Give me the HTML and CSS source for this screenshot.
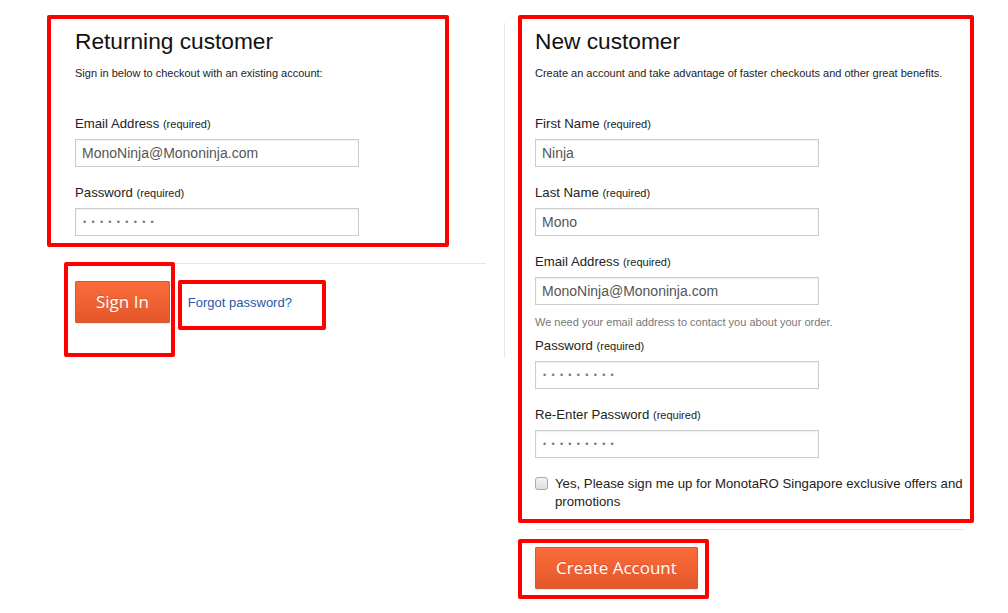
FILE: index.html
```html
<!DOCTYPE html>
<html lang="en">
<head>
<meta charset="utf-8">
<title>Sign in</title>
<link rel="stylesheet" href="styles.css">
</head>
<body>
<main class="page">
  <section class="col col-left">
    <h2 class="title">Returning customer</h2>
    <p class="intro">Sign in below to checkout with an existing account:</p>
    <div class="fields">
      <div class="field">
        <label class="label">Email Address <span class="req">(required)</span></label>
        <input class="input" type="text" value="MonoNinja@Mononinja.com">
      </div>
      <div class="field">
        <label class="label">Password <span class="req">(required)</span></label>
        <input class="input input-pass" type="password" value="123456789">
      </div>
    </div>
    <hr class="rule rule-left">
    <div class="actions">
      <button class="btn" type="button">Sign In</button>
      <a class="link" href="#">Forgot password?</a>
    </div>
  </section>

  <section class="col col-right">
    <h2 class="title">New customer</h2>
    <p class="intro">Create an account and take advantage of faster checkouts and other great benefits.</p>
    <div class="fields">
      <div class="field">
        <label class="label">First Name <span class="req">(required)</span></label>
        <input class="input" type="text" value="Ninja">
      </div>
      <div class="field">
        <label class="label">Last Name <span class="req">(required)</span></label>
        <input class="input" type="text" value="Mono">
      </div>
      <div class="field field-help">
        <label class="label">Email Address <span class="req">(required)</span></label>
        <input class="input" type="text" value="MonoNinja@Mononinja.com">
        <p class="help">We need your email address to contact you about your order.</p>
      </div>
      <div class="field">
        <label class="label">Password <span class="req">(required)</span></label>
        <input class="input input-pass" type="password" value="123456789">
      </div>
      <div class="field">
        <label class="label">Re-Enter Password <span class="req">(required)</span></label>
        <input class="input input-pass" type="password" value="123456789">
      </div>
    </div>
    <label class="check">
      <input class="checkbox" type="checkbox">
      <span class="check-text">Yes, Please sign me up for MonotaRO Singapore exclusive offers and promotions</span>
    </label>
    <hr class="rule rule-right">
    <div class="actions">
      <button class="btn" type="button">Create Account</button>
    </div>
  </section>
</main>

<div class="marks" aria-hidden="true">
  <div class="mark mark-returning"></div>
  <div class="mark mark-signin"></div>
  <div class="mark mark-forgot"></div>
  <div class="mark mark-new"></div>
  <div class="mark mark-create"></div>
</div>
</body>
</html>
```

FILE: styles.css
```css
* { box-sizing: border-box; }

html, body {
  margin: 0;
  padding: 0;
  background: #fff;
}

body {
  font-family: "Liberation Sans", Arial, sans-serif;
  color: #333;
  position: relative;
  width: 1008px;
  height: 613px;
  overflow: hidden;
}

.page {
  display: flex;
  align-items: flex-start;
  padding: 23px 0 0 75px;
}

.col {
  padding-top: 4px;
}

.col-left {
  width: 430px;
  padding-right: 18px;
  padding-bottom: 35px;
  border-right: 1px solid #e8e8e8;
}

.col-right {
  width: 460px;
  padding-left: 30px;
}

.title {
  margin: 0;
  font-size: 22.7px;
  line-height: 28px;
  font-weight: normal;
  color: #111;
}

.intro {
  margin: 11px 0 0;
  font-size: 11px;
  line-height: 15px;
  color: #222;
}

.fields {
  margin-top: 34px;
}

.field {
  margin-bottom: 17px;
}

.field-help {
  margin-bottom: 7px;
}

.label {
  display: block;
  height: 18px;
  font-size: 13.2px;
  line-height: 18px;
  margin-bottom: 6px;
  color: #222;
}

.req {
  font-size: 11px;
  line-height: 1;
}

.input {
  display: block;
  width: 284px;
  height: 28px;
  margin: 0;
  padding: 0 6px;
  border: 1px solid #cccccc;
  border-radius: 0;
  background: #fff;
  box-shadow: inset 0 1px 2px rgba(0, 0, 0, 0.07);
  font-family: "Liberation Sans", Arial, sans-serif;
  font-size: 14px;
  color: #555;
  outline: none;
}

.input-pass {
  font-size: 9px;
  letter-spacing: 5.3px;
  padding-left: 7px;
  color: #777;
}

.help {
  margin: 10px 0 0;
  font-size: 11px;
  line-height: 15px;
  color: #777;
}

.rule {
  margin: 0;
  border: 0;
  border-top: 1px solid #e6e6e6;
  height: 0;
}

.rule-left {
  margin-top: 27px;
}

.rule-right {
  margin-top: 18px;
}

.actions {
  display: flex;
  align-items: center;
  margin-top: 17px;
}

.btn {
  height: 42px;
  margin: 0;
  padding: 0 20px;
  border: 1px solid #d75a2e;
  border-radius: 1px;
  background: linear-gradient(#fb6c3b, #e4572a);
  box-shadow: 0 1px 1px rgba(0, 0, 0, 0.08);
  color: #fff;
  font-family: "Open Sans", "DejaVu Sans", sans-serif;
  font-size: 17px;
  line-height: 40px;
  text-shadow: 0 -1px 0 rgba(150, 40, 0, 0.25);
  cursor: pointer;
}

.link {
  margin-left: 18px;
  font-size: 13px;
  line-height: 15px;
  color: #2856a8;
  text-decoration: none;
}

.check {
  display: flex;
  align-items: flex-start;
  margin-top: 1px;
  font-size: 13.2px;
  line-height: 18px;
  color: #222;
}

.checkbox {
  appearance: none;
  -webkit-appearance: none;
  flex: none;
  width: 13px;
  height: 13px;
  margin: 2px 7px 0 0;
  border: 1px solid #a9a9a9;
  border-radius: 3px;
  background: linear-gradient(#f4f4f4, #dedede);
}

.check-text {
  flex: 1;
}

/* annotation overlay */
.marks {
  position: absolute;
  inset: 0;
  pointer-events: none;
}

.mark {
  position: absolute;
  border: 4px solid #ff0000;
  border-radius: 2px;
}

.mark-returning { left: 47px;  top: 15px;  width: 402px; height: 232px; }
.mark-signin    { left: 64px;  top: 262px; width: 111px; height: 95px; }
.mark-forgot    { left: 178px; top: 280px; width: 148px; height: 50px; }
.mark-new       { left: 518px; top: 15px;  width: 456px; height: 508px; }
.mark-create    { left: 518px; top: 539px; width: 191px; height: 60px; }
```
